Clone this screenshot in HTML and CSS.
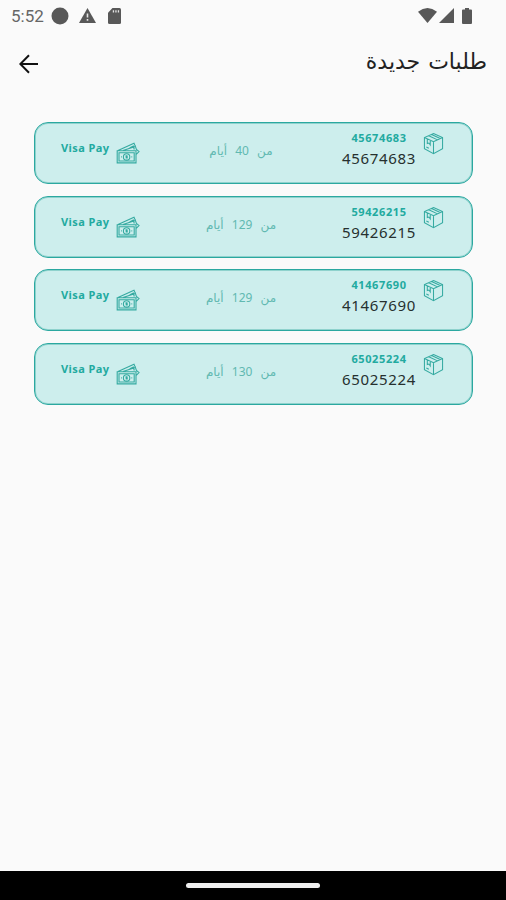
FILE: index.html
```
<!DOCTYPE html>
<html lang="ar" dir="rtl">
<head>
  <meta charset="UTF-8">
  <title>طلبات جديدة</title>
  <link rel="stylesheet" href="styles.css">
</head>
<body>

  <!-- shared icons -->
  <svg class="sprite" width="0" height="0">
    <symbol id="box" viewBox="0 0 22 24">
      <path d="M11 1.5 20.5 5.8V17.4L11 22.6 1.5 17.4V5.8z M1.5 5.8 11 10.2 20.5 5.8 M11 10.2V22.6 M6 3.8 15.3 8.2 M9 2.5 18 6.8 M4.5 7.2V12l1.7-.5 1.4 2V8.6 M3.5 15.6l2.6 1.3"/>
    </symbol>
    <symbol id="money" viewBox="0 0 24 22">
      <path d="M1.2 8.8H20V20.9H1.2z M3 10.7H18.2V19H3z M2 8.4 18 1.2l1.4 3.2 M7 8.4 19.4 4.4l1 3 2.6 2.2-3 3 M13.5 6l3.8-2 1 3.5"/>
      <circle cx="10.6" cy="14.9" r="3.2"/>
      <path d="M11.5 13.8h-1.4v1.1h1.1v1.1H9.7 M5 14.9h.8 M15.4 14.9h.8"/>
    </symbol>
  </svg>

  <div class="status" dir="ltr">
    <span class="clock">5:52</span>
    <svg class="dot" width="18" height="18" viewBox="0 0 18 18"><circle cx="9" cy="9" r="8.5"/></svg>
    <svg class="warn" width="17" height="15" viewBox="0 0 17 15"><path d="M8.5 0 17 15H0z"/><path class="hole" d="M7.7 5.5h1.6v4H7.7z M7.7 11h1.6v1.8H7.7z"/></svg>
    <svg class="sd" width="13" height="16" viewBox="0 0 13 16"><path d="M4.5 0H11.5Q13 0 13 1.5V14.5Q13 16 11.5 16H1.5Q0 16 0 14.5V4.8z"/><path class="hole" d="M4.8 2.2h1.3v2.4H4.8z M7.3 2.2h1.3v2.4H7.3z M9.8 2.2h1.3v2.4H9.8z"/></svg>
    <svg class="wifi" width="19" height="15" viewBox="0 0 19 15"><path d="M0 3.7Q9.5-3.5 19 3.7L9.5 15z"/></svg>
    <svg class="signal" width="15" height="15" viewBox="0 0 15 15"><path d="M15 0V15H0z"/></svg>
    <svg class="battery" width="10" height="16" viewBox="0 0 10 16"><path d="M3 0H7V1.6H9Q10 1.6 10 2.6V15Q10 16 9 16H1Q0 16 0 15V2.6Q0 1.6 1 1.6H3z"/></svg>
  </div>

  <header class="topbar">
    <h1>طلبات جديدة</h1>
    <svg class="back" width="20" height="20" viewBox="0 0 20 20"><path d="M19 10H1.5 M10 1.3 1.3 10 10 18.7"/></svg>
  </header>

  <main class="orders">
    <div class="card">
      <svg class="icon box"><use href="#box"/></svg>
      <div class="order"><b>45674683</b><span>45674683</span></div>
      <div class="when">من 40 أيام</div>
      <svg class="icon money"><use href="#money"/></svg>
      <div class="pay" dir="ltr">Visa Pay</div>
    </div>
    <div class="card">
      <svg class="icon box"><use href="#box"/></svg>
      <div class="order"><b>59426215</b><span>59426215</span></div>
      <div class="when">من 129 أيام</div>
      <svg class="icon money"><use href="#money"/></svg>
      <div class="pay" dir="ltr">Visa Pay</div>
    </div>
    <div class="card">
      <svg class="icon box"><use href="#box"/></svg>
      <div class="order"><b>41467690</b><span>41467690</span></div>
      <div class="when">من 129 أيام</div>
      <svg class="icon money"><use href="#money"/></svg>
      <div class="pay" dir="ltr">Visa Pay</div>
    </div>
    <div class="card">
      <svg class="icon box"><use href="#box"/></svg>
      <div class="order"><b>65025224</b><span>65025224</span></div>
      <div class="when">من 130 أيام</div>
      <svg class="icon money"><use href="#money"/></svg>
      <div class="pay" dir="ltr">Visa Pay</div>
    </div>
  </main>

  <footer class="navbar"><div class="handle"></div></footer>

</body>
</html>
```

FILE: styles.css
```
* {
  box-sizing: border-box;
}

body {
  margin: 0;
  height: 900px;
  display: flex;
  flex-direction: column;
  background: #fafafa;
  font-family: "Noto Sans", "DejaVu Sans", sans-serif;
  overflow: hidden;
}

.sprite {
  position: absolute;
}

.status {
  display: flex;
  align-items: center;
  height: 31px;
  padding: 0 34px 0 11px;
  color: #666;
  fill: #585858;
}

.clock {
  width: 40px;
  font: 17px Roboto, sans-serif;
  white-space: nowrap;
}

.warn {
  margin-left: 10px;
}

.sd {
  margin-left: 12px;
}

.wifi {
  margin-left: auto;
}

.signal {
  margin-left: 2px;
}

.battery {
  margin-left: 8px;
}

.hole {
  fill: #e4e4e4;
}

.topbar {
  display: flex;
  align-items: center;
  justify-content: space-between;
  height: 66px;
  padding: 0 19px;
}

h1 {
  margin: 0 0 6px;
  font: 22px "DejaVu Sans", sans-serif;
  word-spacing: 1px;
  color: #222;
  white-space: nowrap;
}

.back {
  fill: none;
  stroke: #111;
  stroke-width: 2;
}

.orders {
  flex: 1;
  display: flex;
  flex-direction: column;
  gap: 11.7px;
  padding: 25px 33px 0 34px;
}

.card {
  display: flex;
  height: 62px;
  padding: 0 28px 0 26px;
  border: 1px solid #2ba8a0;
  border-radius: 14px;
  background: #cdeeed;
  box-shadow: inset 0 0 0 1px #8fd2cd;
  color: #22aaa0;
}

.icon {
  fill: none;
  stroke: #35aaa1;
  stroke-width: 1.1;
}

.box {
  width: 21px;
  height: 23px;
  margin-top: 9px;
}

.order {
  display: flex;
  flex-direction: column;
  align-items: center;
  width: 74px;
  margin: 7px 7px 0 0;
}

.order b {
  font-size: 11px;
  line-height: 16px;
  letter-spacing: 0.6px;
}

.order span {
  font-size: 15px;
  line-height: 24px;
  letter-spacing: 0.7px;
  color: #26302f;
}

.when {
  width: 90px;
  margin: 18px 56px 0 0;
  font: 12px/20px "Noto Sans", "DejaVu Sans", sans-serif;
  text-align: center;
  word-spacing: 5px;
  color: #61b9b1;
}

.money {
  width: 24px;
  height: 22px;
  margin: 19px auto 0 6px;
}

.pay {
  width: 49px;
  margin-top: 16px;
  font-size: 11px;
  font-weight: bold;
  line-height: 18px;
  letter-spacing: 0.4px;
  white-space: nowrap;
}

.navbar {
  display: flex;
  justify-content: center;
  height: 29px;
  padding-top: 12px;
  background: #000;
}

.handle {
  width: 134px;
  height: 5px;
  border-radius: 3px;
  background: #eee;
}
```
